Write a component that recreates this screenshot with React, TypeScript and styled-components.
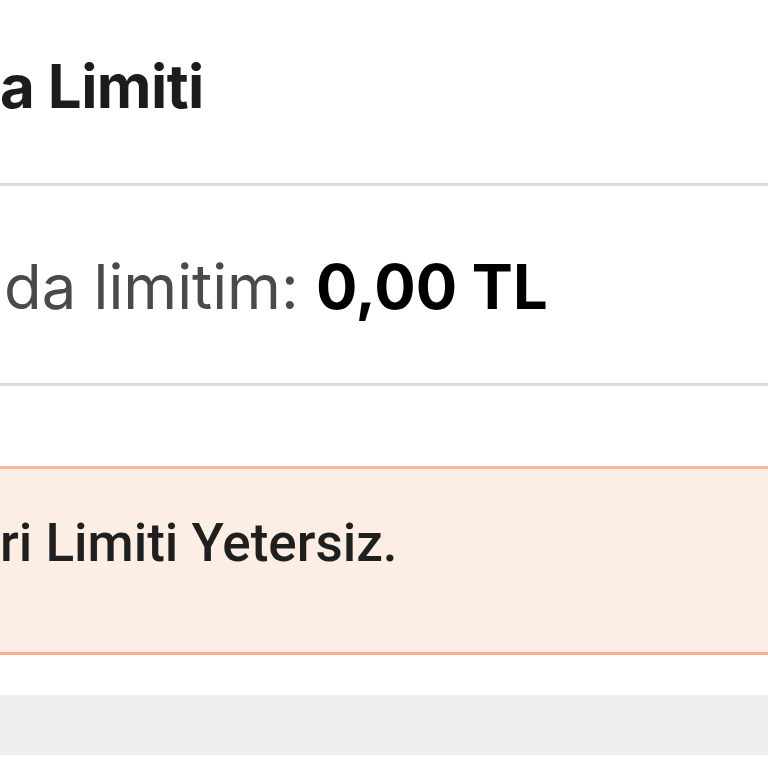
import React from 'react';
import styled, {createGlobalStyle} from 'styled-components';

const GlobalStyle = createGlobalStyle`
  html, body {
    margin: 0;
    padding: 0;
    background: #ffffff;
  }
  body {
    font-family: Inter, "Noto Sans", sans-serif;
  }
`;

const Page = styled.div`
  width: 768px;
  height: 768px;
  overflow: hidden;
  background: #ffffff;
  display: flex;
  flex-direction: column;
`;

const Header = styled.div`
  height: 183px;
  display: flex;
  align-items: flex-start;
  padding-top: 48px;
  box-sizing: border-box;
`;

const Title = styled.h1`
  margin: 0;
  font-size: 60px;
  line-height: 76px;
  font-weight: 700;
  color: #1c1c1c;
  letter-spacing: -0.6px;
  white-space: nowrap;
`;

const Divider = styled.div`
  height: 3px;
  background: #dcdcdc;
  flex-shrink: 0;
`;

const LimitRow = styled.div`
  height: 197px;
  display: flex;
  align-items: flex-start;
  padding: 61px 0 0 4px;
  box-sizing: border-box;
`;

const LimitText = styled.div`
  font-size: 61.5px;
  line-height: 80px;
  color: #4a4a4a;
  white-space: nowrap;

  strong {
    color: #000000;
    font-weight: 700;
  }
`;

const Spacer = styled.div<{$h: number}>`
  height: ${p => p.$h}px;
  flex-shrink: 0;
`;

const Alert = styled.div`
  height: 189px;
  box-sizing: border-box;
  background: #fdeee5;
  border-top: 3px solid #f8b896;
  border-bottom: 3px solid #f8b291;
  display: flex;
  align-items: flex-start;
  padding-top: 40px;
  flex-shrink: 0;
`;

const AlertText = styled.div`
  font-family: Roboto, "Liberation Sans", sans-serif;
  font-size: 53px;
  line-height: 68px;
  font-weight: 500;
  color: #1f1f1f;
  white-space: nowrap;
`;

const GreyBand = styled.div`
  height: 60px;
  background: #efefef;
  flex-shrink: 0;
`;

export default function App() {
  return (
    <>
      <GlobalStyle />
      <Page>
        <Header>
          <Title>a Limiti</Title>
        </Header>
        <Divider />
        <LimitRow>
          <LimitText>
            da limitim: <strong>0,00 TL</strong>
          </LimitText>
        </LimitRow>
        <Divider />
        <Spacer $h={80} />
        <Alert>
          <AlertText>ri Limiti Yetersiz.</AlertText>
        </Alert>
        <Spacer $h={40} />
        <GreyBand />
      </Page>
    </>
  );
}
